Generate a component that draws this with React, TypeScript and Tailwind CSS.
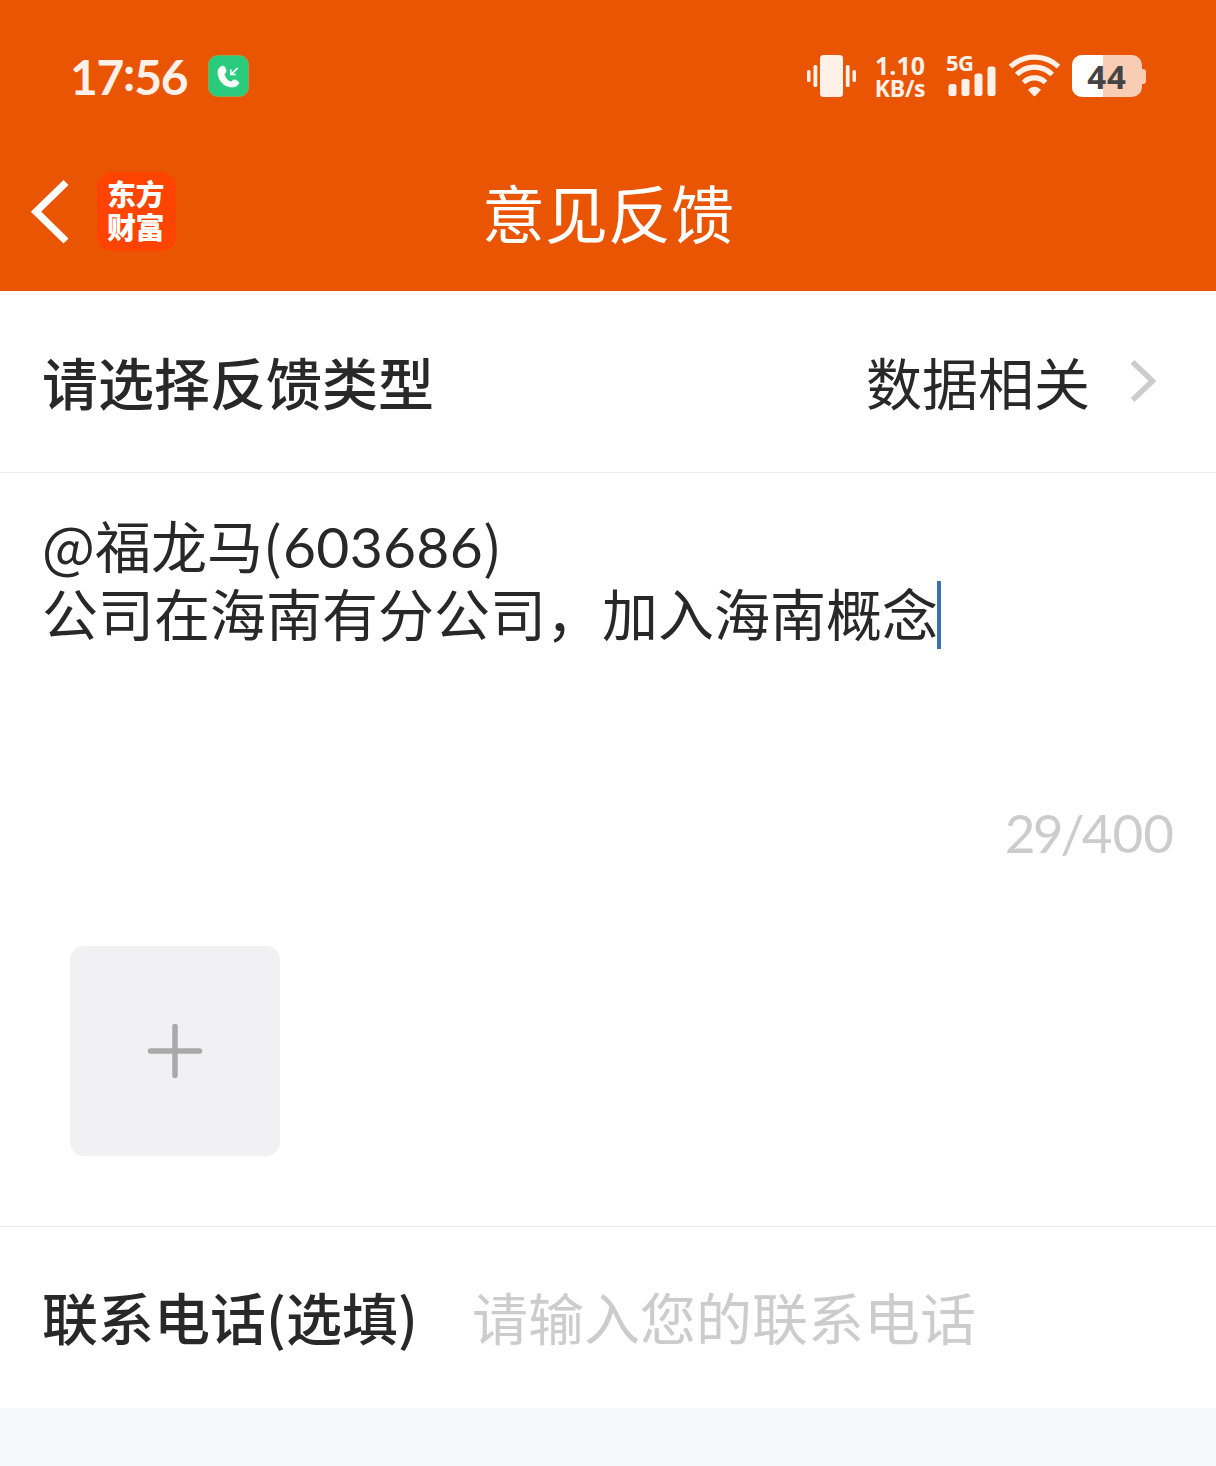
import { useState } from 'react';

function MissedCallBadge() {
  return (
    <svg width="42" height="42" viewBox="0 0 42 42">
      <rect x="0.5" y="0.5" width="40" height="41" rx="9" fill="#2bcb7e" stroke="#8bab52" strokeWidth="1" />
      <path
        d="M15.500 11C11 11.500 9.500 15 10.200 19.500C11.500 27 17 32 24 32C27.500 32 30.500 30 31 27.800C30 26 27.500 24.800 25.500 25C24.800 25.300 24 26.800 23 27C19.500 26 17 22.800 16.300 19.500C16.300 18.500 18 17.500 18 16.800C17.800 14.500 17 12 15.500 11z"
        fill="#fff"
        stroke="#fff"
        strokeWidth="0.8"
      />
      <path d="M29.700 13.200l-6.500 6M22.800 14.500v5h5" fill="none" stroke="#fff" strokeWidth="1.700" />
    </svg>
  );
}

function VibrateIcon() {
  return (
    <svg width="50" height="42" viewBox="0 0 50 42" fill="#fff0e8">
      <rect x="0" y="15" width="3.500" height="12" rx="1.500" />
      <rect x="6.500" y="10" width="3.800" height="22" rx="1.500" />
      <rect x="13" y="0" width="23" height="42" rx="3.500" />
      <rect x="38.800" y="10" width="3.800" height="22" rx="1.500" />
      <rect x="45.500" y="15" width="3.500" height="12" rx="1.500" />
    </svg>
  );
}

function SignalBars() {
  return (
    <svg width="49" height="30" viewBox="0 0 49 30" fill="#fff0e8">
      <rect x="0.500" y="18" width="8" height="12" rx="2.500" />
      <rect x="13.500" y="13" width="8" height="17" rx="2.500" />
      <rect x="26.500" y="7.500" width="8" height="22.500" rx="2.500" />
      <rect x="39.500" y="0.500" width="8" height="29.500" rx="2.500" />
    </svg>
  );
}

function WifiIcon() {
  return (
    <svg width="54" height="44" viewBox="0 0 54 44">
      <g fill="none" stroke="#fff0e8" strokeWidth="5.200">
        <path d="M3.500 12.700a35 35 0 0 1 48 0" />
        <path d="M9.800 20.500a25 25 0 0 1 35.400 0" />
        <path d="M16.500 28.500a15.500 15.500 0 0 1 22 0" />
      </g>
      <path d="M21 35.700q6.500-6 13 0l-5.200 5.800q-1.300 1.400-2.600 0z" fill="#fff0e8" />
    </svg>
  );
}

function Battery({ level }: { level: number }) {
  return (
    <div className="flex items-center">
      <div className="relative flex h-[42px] w-[70px] items-center justify-center overflow-hidden rounded-[10px] bg-[#f9ccb4]">
        <div className="absolute inset-y-0 left-0 bg-white" style={{ width: `${level}%` }} />
        <span className="relative font-['Open_Sans'] text-[33px] leading-none font-bold tracking-[1px] text-[#444]">
          {level}
        </span>
      </div>
      <div className="h-[15px] w-1 rounded-r-[3px] bg-[#f9ccb4]" />
    </div>
  );
}

function StatusBar() {
  return (
    <div className="flex h-[132px] items-start pt-[54px] pr-[70px] pl-[70px]">
      <span className="flex w-[138px] font-['Lato'] text-[48px] leading-[46px] font-bold tracking-[-1.3px] text-[#fff0e8]">
        17<span className="-mt-[4px]">:</span>56
      </span>
      <div className="pt-px">
        <MissedCallBadge />
      </div>
      <div className="ml-auto flex items-start text-[#fff0e8]">
        <div className="pt-px">
          <VibrateIcon />
        </div>
        <div className="ml-[17px] flex w-[52px] flex-col items-center font-['Open_Sans'] font-bold">
          <span className="text-[25px] leading-[23px]">1.10</span>
          <span className="text-[23px] leading-[22px] tracking-[-0.3px]">KB/s</span>
        </div>
        <div className="ml-[20px] flex w-[52px] flex-col">
          <span className="h-[12px] font-['Open_Sans'] text-[22px] leading-[17px] font-bold tracking-[-0.5px]">5G</span>
          <div className="pl-[2px]">
            <SignalBars />
          </div>
        </div>
        <div className="ml-[9px]">
          <WifiIcon />
        </div>
        <div className="ml-[11px] pt-px">
          <Battery level={44} />
        </div>
      </div>
    </div>
  );
}

function NavBar() {
  return (
    <div className="grid h-[159px] grid-cols-3 items-center">
      <div className="flex items-center pl-[30px]">
        <svg width="40" height="66" viewBox="0 0 40 66" fill="none" stroke="#fff" strokeWidth="7.200">
          <path d="M36 3.500L6 32.700L36 62" />
        </svg>
        <div className="ml-[27px] flex size-[79px] flex-col items-center justify-center rounded-[15px] bg-[#ff4300] pr-[2px] pb-[4px] text-[29px] leading-[33px] font-black tracking-[-0.5px] text-white">
          <span>东方</span>
          <span>财富</span>
        </div>
      </div>
      <h1 className="pb-[3px] text-center text-[63px] leading-none whitespace-nowrap text-white">意见反馈</h1>
    </div>
  );
}

export default function App() {
  const [phone, setPhone] = useState('');

  return (
    <div className="h-[1466px] w-[1216px] overflow-hidden bg-[#f7f8fa] font-['Noto_Sans_CJK_SC',sans-serif] text-[56px] text-[#282828]">
      <header className="bg-[#ea5504]">
        <StatusBar />
        <NavBar />
      </header>

      <main className="bg-white">
        {/* Feedback type */}
        <div className="flex h-[182px] items-center justify-between border-b border-[#ebebeb] pr-[58px] pb-[2px] pl-[42px]">
          <span className="leading-none font-medium">请选择反馈类型</span>
          <div className="flex items-center">
            <span className="leading-none">数据相关</span>
            <svg className="ml-[40px]" width="28" height="44" viewBox="0 0 28 44" fill="none" stroke="#ccc" strokeWidth="5.500">
              <path d="M2.500 3L22.500 22L2.500 41" />
            </svg>
          </div>
        </div>

        {/* Message and attachments */}
        <div className="h-[754px] border-b border-[#ebebeb] pt-[38px]">
          <div className="h-[288px] pl-[42px] leading-[66px]">
            <p>
              @福龙马(<span className="ml-[1px] font-['Lato'] text-[57px] tracking-[0.3px]">603686</span>)
            </p>
            <p className="flex h-[66px]">
              公司在海南有分公司，加入海南概念
              <span className="mt-[2px] -ml-px h-[68px] w-1 shrink-0 bg-[#3a74af]" />
            </p>
          </div>
          <p className="pr-[42px] text-right font-['Lato'] text-[53px] leading-[68px] text-[#ccc]">
            <span className="tracking-[-2.8px]">29/</span>400
          </p>
          <button className="mt-[79px] ml-[70px] flex size-[210px] items-center justify-center rounded-[14px] bg-[#f1f1f3]">
            <svg width="56" height="56" viewBox="0 0 56 56" stroke="#a9a9a9" strokeWidth="5.500" strokeLinecap="round">
              <path d="M28 3.500v49M3.500 28h49" />
            </svg>
          </button>
        </div>

        {/* Phone */}
        <label className="flex h-[181px] items-center pb-[3px] pl-[42px]">
          <span className="w-[430px] shrink-0 leading-none font-medium">联系电话(选填)</span>
          <input
            type="tel"
            value={phone}
            onChange={(e) => setPhone(e.target.value)}
            placeholder="请输入您的联系电话"
            className="h-[80px] w-[640px] bg-transparent outline-none placeholder:text-[#ccc]"
          />
        </label>
      </main>
    </div>
  );
}
